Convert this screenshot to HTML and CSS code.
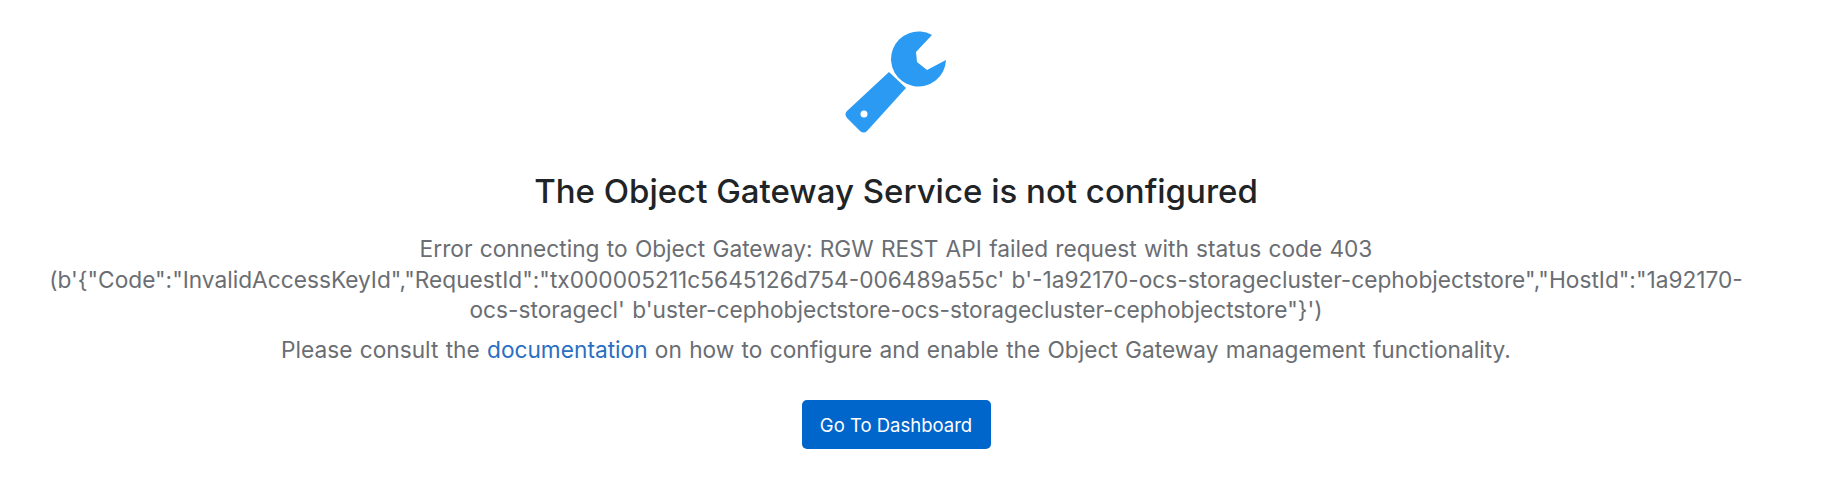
FILE: index.html
```html
<!DOCTYPE html>
<html lang="en">
  <head>
    <meta charset="UTF-8" />
    <title>Object Gateway</title>
    <link rel="stylesheet" href="styles.css">
  </head>
  <body>
    <div class="empty-state">
      <svg class="empty-icon" viewBox="26 10 102 110" width="102" height="110">
        <path d="M127 40 A27.5 27.5 0 1 1 113 15 L97 32 L98 42 L108 50 Z" />
        <path d="M70 52 L87 68 L48 111 Q45 114 41 111 L28 98 Q25 94 28 91 Z" />
        <circle class="hole" cx="45" cy="94" r="3.5" />
      </svg>
      <h1 class="title">The Object Gateway Service is not configured</h1>
      <p class="message">Error connecting to Object Gateway: RGW REST API failed request with status code 403<br />(b'{"Code":"InvalidAccessKeyId","RequestId":"tx000005211c5645126d754-006489a55c' b'-1a92170-ocs-storagecluster-cephobjectstore","HostId":"1a92170-<br />ocs-storagecl' b'uster-cephobjectstore-ocs-storagecluster-cephobjectstore"}')</p>
      <p class="message hint">Please consult the <a href="#">documentation</a> on how to configure and enable the Object Gateway management functionality.</p>
      <button type="button" class="btn">Go To Dashboard</button>
    </div>
  </body>
</html>
```

FILE: styles.css
```css
* {
  box-sizing: border-box;
  margin: 0;
  padding: 0;
}

body {
  background: #fff;
  font-family: Inter, "Liberation Sans", sans-serif;
}

.empty-state {
  display: flex;
  flex-direction: column;
  align-items: center;
  padding: 30px 29px 0 0;
  text-align: center;
}

.empty-icon {
  display: block;
  fill: #2b9af3;
}

.hole {
  fill: #fff;
}

.title {
  margin-top: 31px;
  font-size: 33px;
  line-height: 40px;
  font-weight: 500;
  color: #212427;
}

.message {
  margin-top: 23px;
  font-size: 22.7px;
  line-height: 30.5px;
  word-spacing: 0.9px;
  color: #6a6e73;
}

.hint {
  margin-top: 9px;
}

.message a {
  color: #2a6fc0;
  text-decoration: none;
}

.btn {
  margin-top: 35px;
  width: 189px;
  height: 49px;
  border: 0;
  border-radius: 5px;
  background: #0066cc;
  color: #fff;
  font-family: inherit;
  font-size: 18.5px;
}
```
